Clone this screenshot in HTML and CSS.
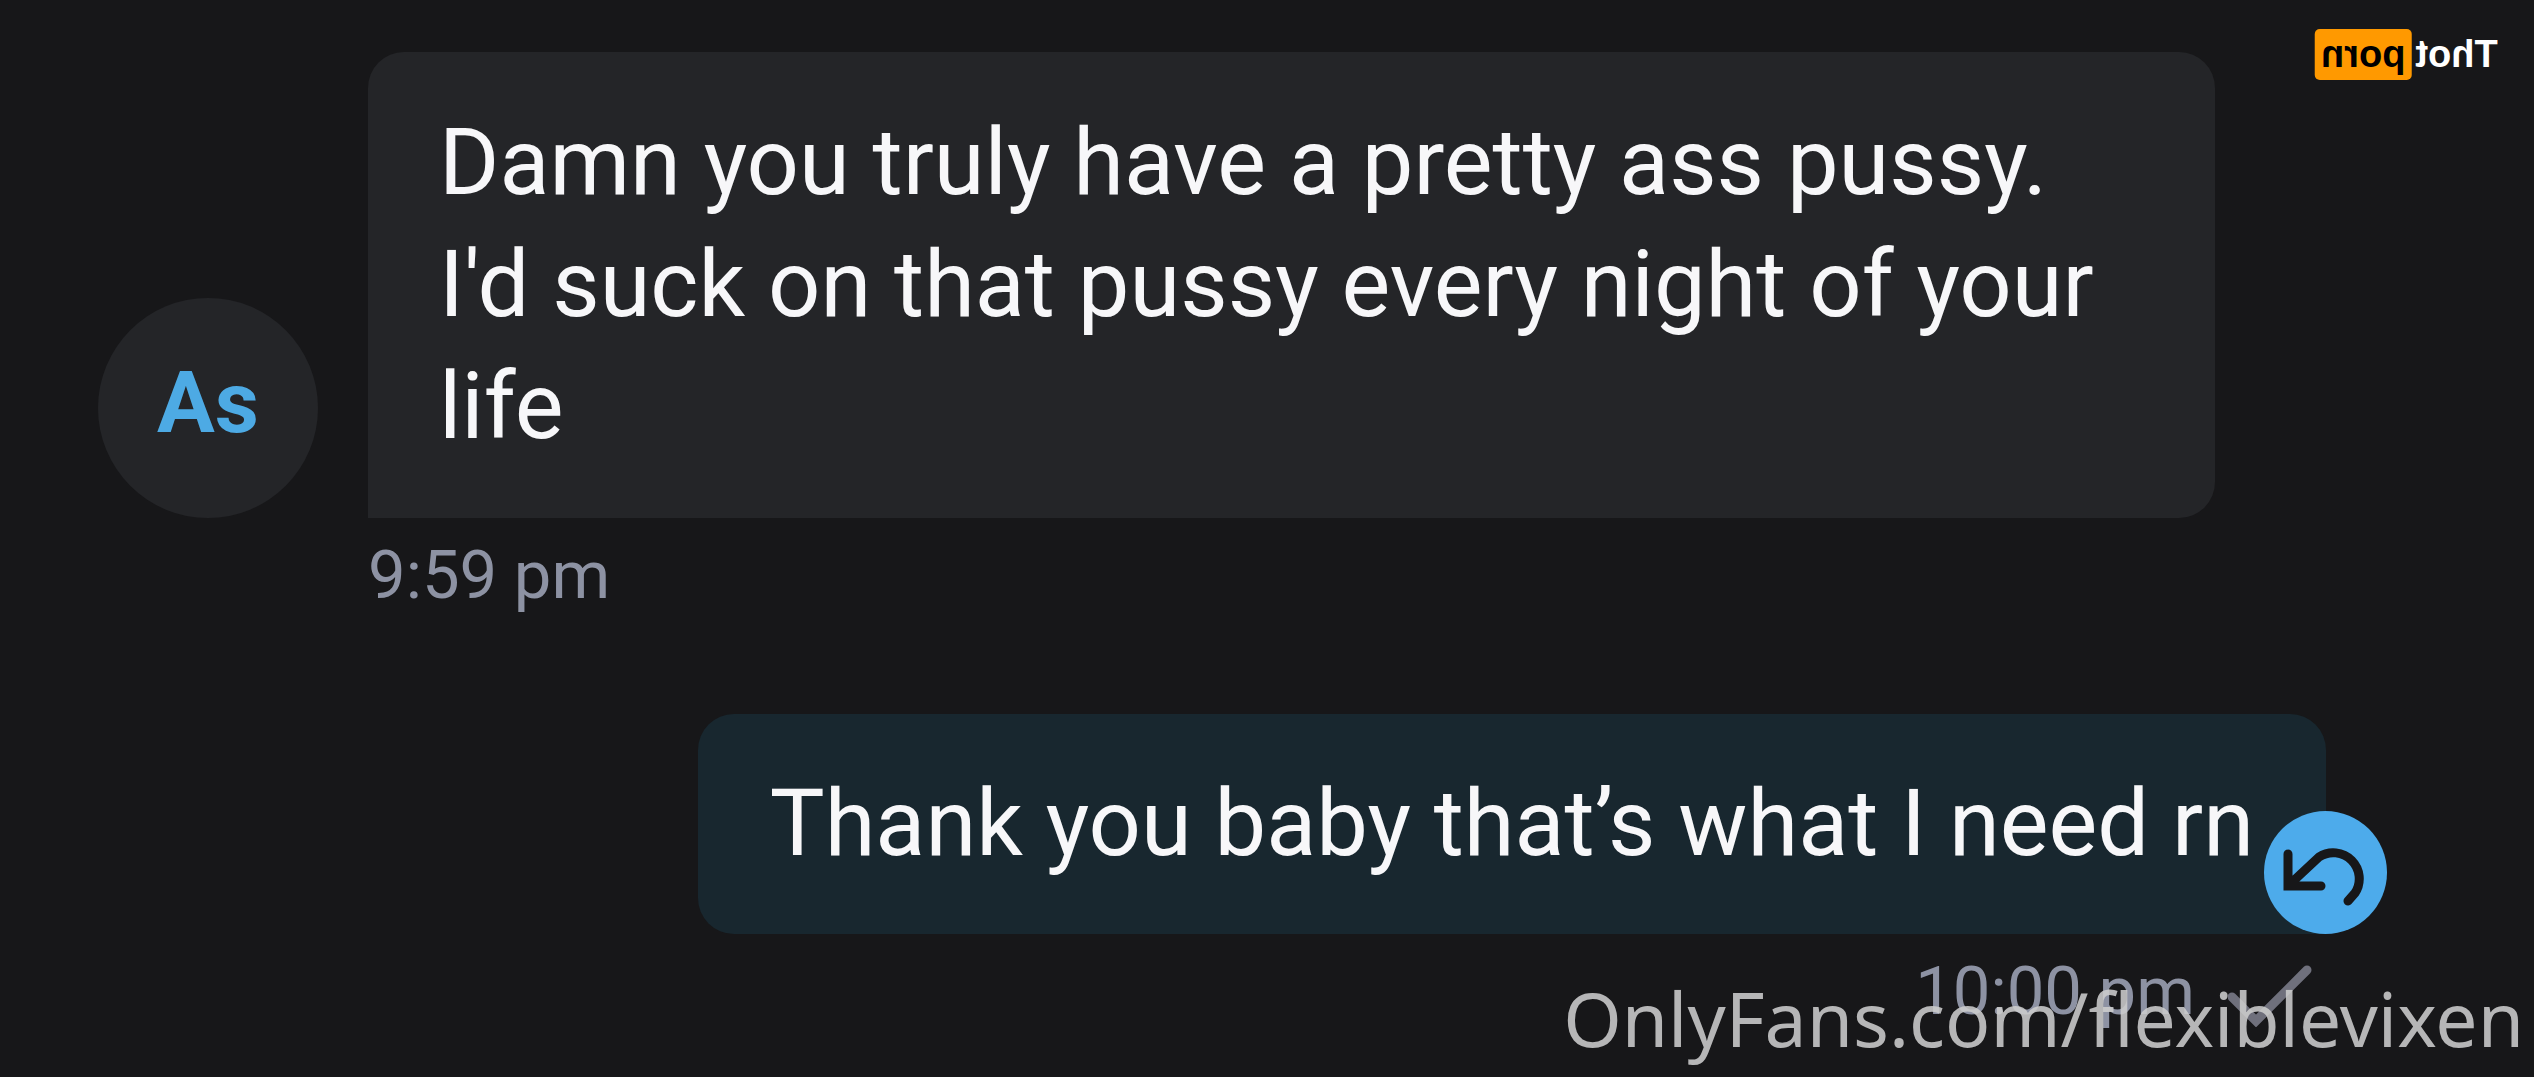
FILE: index.html
```html
<!DOCTYPE html>
<html lang="en">
<head>
<meta charset="utf-8">
<meta name="viewport" content="width=device-width, initial-scale=1">
<title>Messages</title>
<link rel="stylesheet" href="styles.css">
</head>
<body>
<main class="chat">
  <article class="message message-in">
    <div class="avatar">As</div>
    <p class="bubble bubble-in">Damn you truly have a pretty ass pussy. I'd suck on that pussy every night of your life</p>
    <div class="meta"><time>9:59 pm</time></div>
  </article>
  <article class="message-out">
    <div class="bubble-wrap">
      <p class="bubble bubble-out">Thank you baby that’s what I need rn</p>
      <button class="reply" type="button" aria-label="Reply">
        <svg viewBox="0 0 123 123" aria-hidden="true"><path stroke-linejoin="miter" d="M24 43V75H57M25 74L55 46A26 26 0 0 1 91 82L84 90"/></svg>
      </button>
    </div>
    <div class="meta">
      <time>10:00 pm</time>
      <svg class="check" viewBox="0 0 84 62" aria-hidden="true"><path d="M4 32L28 56L79 5"/></svg>
    </div>
  </article>
</main>
<div class="logo"><span>Thot</span><span class="logo-box">porn</span></div>
<div class="watermark">OnlyFans.com/flexiblevixen</div>
</body>
</html>
```
FILE: styles.css
```css
* {
  box-sizing: border-box;
}

body {
  margin: 0;
  min-height: 100vh;
  position: relative;
  overflow: hidden;
  background: #171719;
  color: #f7f7f9;
  font-family: Roboto, "Liberation Sans", sans-serif;
}

.chat {
  display: flex;
  flex-direction: column;
  gap: 99px;
  padding: 52px 208px 0 98px;
}

.message-in {
  display: grid;
  grid-template-columns: 220px 1fr;
  column-gap: 50px;
  align-items: end;
  margin-right: 111px;
}

.message-in .meta {
  grid-column: 2;
}

.avatar {
  display: flex;
  align-items: center;
  justify-content: center;
  height: 220px;
  padding-bottom: 12px;
  border-radius: 50%;
  background: #242528;
  color: #4daae4;
  font-size: 86px;
  font-weight: 700;
}

.bubble {
  margin: 0;
  padding: 50px 71px;
  border-radius: 36px;
  font-size: 92px;
  line-height: 122px;
}

.bubble-in {
  background: #242528;
  border-bottom-left-radius: 0;
}

.message-out {
  display: flex;
  flex-direction: column;
  align-items: flex-end;
}

.bubble-wrap {
  position: relative;
}

.bubble-out {
  padding: 49px 72px;
  background: #18272f;
  border-bottom-right-radius: 0;
}

.reply {
  position: absolute;
  right: -61px;
  bottom: 0;
  width: 123px;
  height: 123px;
  padding: 0;
  border: 0;
  border-radius: 50%;
  background: #4dabeb;
}

.reply svg {
  display: block;
}

svg path {
  fill: none;
  stroke: #171719;
  stroke-width: 9;
  stroke-linecap: round;
}

.meta {
  display: flex;
  gap: 33px;
  padding: 17px 0 0;
  color: #8d92a3;
  font-size: 67px;
  line-height: 80px;
}

.message-out .meta {
  padding-right: 14px;
}

.check {
  width: 84px;
  height: 62px;
  margin-top: 14px;
}

.check path {
  stroke: #6f707c;
}

.logo {
  position: absolute;
  top: 29px;
  right: 36px;
  display: flex;
  align-items: center;
  gap: 4px;
  color: #fff;
  font: 700 38px/51px "Liberation Sans", Arial, sans-serif;
  transform: scaleX(-1);
}

.logo-box {
  padding: 0 6px;
  border-radius: 5px;
  background: #ff9900;
  color: #000;
}

.watermark {
  position: absolute;
  right: 10px;
  bottom: 3px;
  color: rgba(205, 205, 205, 0.88);
  font: 400 75px/112px "Noto Sans", "Open Sans", sans-serif;
}
```
